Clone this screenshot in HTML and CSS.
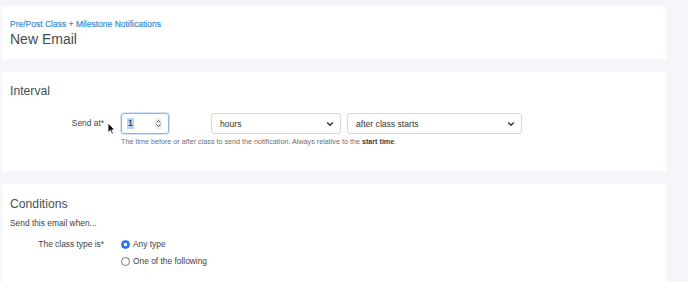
FILE: index.html
```html
<!DOCTYPE html>
<html>
<head>
<meta charset="utf-8">
<link rel="stylesheet" href="styles.css">
</head>
<body>
<div class="page">
  <section class="card head">
    <a class="crumb">Pre/Post Class + Milestone Notifications</a>
    <h1 class="title">New Email</h1>
  </section>

  <section class="card interval">
    <h2 class="section-title">Interval</h2>
    <div class="form-row">
      <label class="label">Send at*</label>
      <div class="field">
        <div class="controls">
          <div class="number">
            <span class="num-val">1</span>
            <svg class="spin" width="6" height="9" viewBox="0 0 6 9"><path d="M1 3.5 L3 1.5 L5 3.5 M1 5.5 L3 7.5 L5 5.5" fill="none" stroke="#555" stroke-width="1"/></svg>
          </div>
          <div class="select sel-hours"><span>hours</span>
            <svg width="8" height="6" viewBox="0 0 8 6"><path d="M1.2 1.5 L4 4.3 L6.8 1.5" fill="none" stroke="#333" stroke-width="1.4"/></svg>
          </div>
          <div class="select sel-when"><span>after class starts</span>
            <svg width="8" height="6" viewBox="0 0 8 6"><path d="M1.2 1.5 L4 4.3 L6.8 1.5" fill="none" stroke="#333" stroke-width="1.4"/></svg>
          </div>
        </div>
        <p class="help">The time before or after class to send the notification. Always relative to the <b>start time</b>.</p>
      </div>
    </div>
    <svg class="cursor" width="9" height="13" viewBox="0 0 9 13"><path d="M1 1 L1 10.5 L3.3 8.4 L5 12 L6.4 11.4 L4.8 7.9 L7.8 7.9 Z" fill="#111" stroke="#fff" stroke-width="0.8"/></svg>
  </section>

  <section class="card conditions">
    <h2 class="section-title">Conditions</h2>
    <p class="intro">Send this email when...</p>
    <div class="form-row radio-row">
      <label class="label">The class type is*</label>
      <div class="radios">
        <div class="radio-item"><span class="radio checked"></span><span>Any type</span></div>
        <div class="radio-item"><span class="radio"></span><span>One of the following</span></div>
      </div>
    </div>
  </section>
</div>
</body>
</html>
```

FILE: styles.css
```css
* { box-sizing: border-box; }
html, body { margin: 0; padding: 0; }
body {
  background: #f4f6fa;
  font-family: "Liberation Sans", Arial, sans-serif;
  color: #333;
  overflow: hidden;
}
.page {
  width: 688px;
  height: 282px;
  padding: 6px 22px 0 2px;
  display: flex;
  flex-direction: column;
  gap: 13px;
}
.card {
  background: #ffffff;
  padding: 0 8px;
  position: relative;
}
.head {
  height: 53px;
  padding-top: 13px;
}
.crumb {
  display: block;
  color: #2f88d4;
  font-size: 8.5px;
  line-height: 10px;
  -webkit-text-stroke: 0.15px #2f88d4;
}
.title {
  margin: 2px 0 0;
  font-size: 14px;
  font-weight: normal;
  color: #454a50;
  line-height: 16px;
}
.interval {
  height: 99px;
  padding-top: 12px;
}
.section-title {
  margin: 0;
  font-size: 12.2px;
  line-height: 14px;
  font-weight: normal;
  color: #4a4f55;
}
.form-row {
  display: flex;
  gap: 17px;
}
.interval .form-row { margin-top: 15px; }
.label {
  width: 94px;
  text-align: right;
  font-size: 8.4px;
  color: #3d4248;
  line-height: 21px;
}
.field { display: flex; flex-direction: column; }
.controls {
  display: flex;
  align-items: center;
}
.number {
  width: 48px;
  height: 21px;
  border: 1.5px solid #8ab6ee;
  border-radius: 3px;
  box-shadow: 0 0 0 1px #d3e4fa;
  display: flex;
  align-items: center;
  justify-content: space-between;
  padding: 0 6px 0 5px;
}
.num-val {
  font-size: 9px;
  background: #b9d5f7;
  color: #222;
  line-height: 11px;
  padding: 0 1px;
}
.spin { background: #eceef1; border-radius: 2px; width: 7px; height: 11px; padding: 1px 0.5px; }
.select {
  height: 21px;
  border: 1px solid #d4d7db;
  border-radius: 3px;
  display: flex;
  align-items: center;
  justify-content: space-between;
  padding: 0 6px 0 8px;
  font-size: 8.6px;
  color: #333;
}
.sel-hours { width: 130px; margin-left: 42px; }
.sel-when { width: 175px; margin-left: 6px; }
.help {
  margin: 3px 0 0;
  font-size: 7.2px;
  color: #6b7076;
  line-height: 9px;
}
.help b { color: #3a3e43; }
.cursor {
  position: absolute;
  left: 105px;
  top: 50px;
}
.conditions {
  flex: 1;
  padding-top: 13px;
}
.intro {
  margin: 7px 0 0;
  font-size: 8.4px;
  color: #3d4248;
  line-height: 10px;
}
.radio-row { margin-top: 10px; }
.radio-row .label { line-height: 12px; }
.radios { display: flex; flex-direction: column; gap: 5px; }
.radio-item {
  display: flex;
  align-items: center;
  gap: 3px;
  font-size: 8.4px;
  color: #3d4248;
  line-height: 12px;
}
.radio {
  width: 9px;
  height: 9px;
  border-radius: 50%;
  border: 1px solid #777;
  background: #fff;
}
.radio.checked {
  border: 1px solid #1f6fe0;
  background: radial-gradient(circle, #ffffff 0 1.4px, #2a7be4 1.9px);
}
```
